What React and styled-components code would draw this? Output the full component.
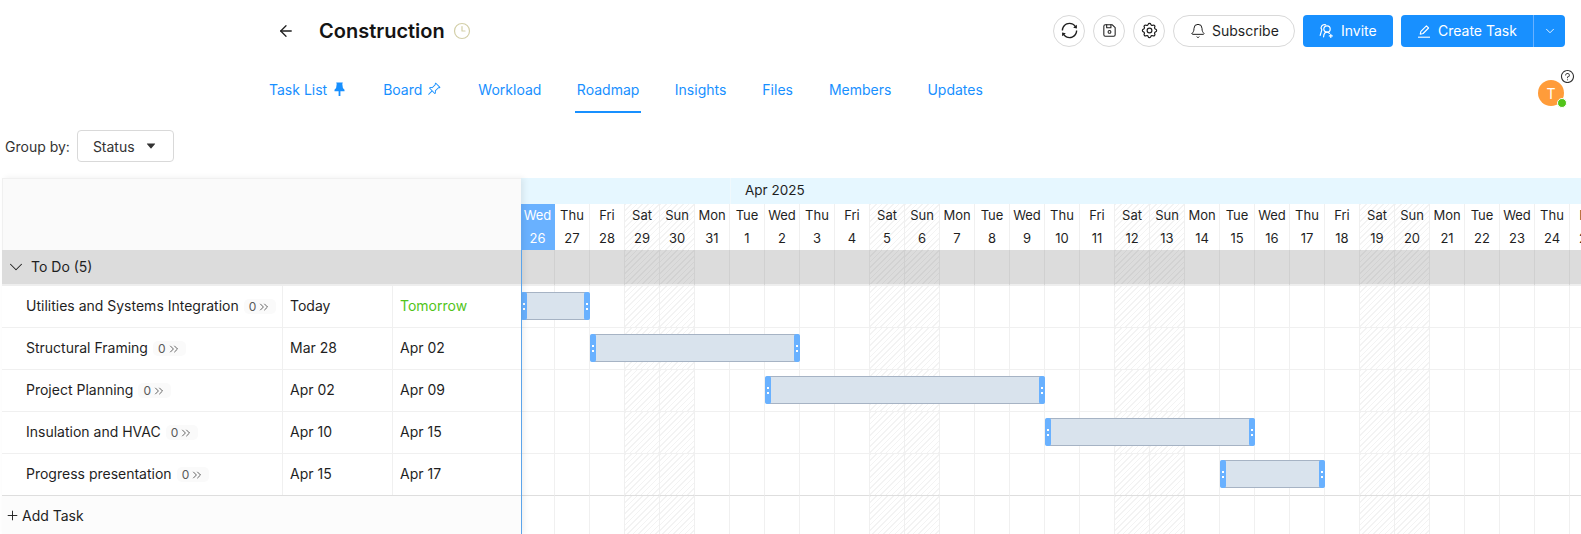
import React from 'react';
import styled, { createGlobalStyle } from 'styled-components';
import { ArrowLeft, Clock3, Bell, ChevronDown, ChevronsRight, Plus } from 'lucide-react';
import { AiOutlineSync, AiFillCaretDown, AiOutlineQuestionCircle } from 'react-icons/ai';
import { BsPinAngle } from 'react-icons/bs';
import { TbDeviceFloppy, TbSettings } from 'react-icons/tb';

const BLUE = '#1890ff';

const GlobalStyle = createGlobalStyle`
	html, body {
		margin: 0;
		background: #fff;
		font-family: Inter, "Noto Sans", sans-serif;
		color: #1f1f1f;
	}
	* {
		box-sizing: border-box;
	}
`;

const Page = styled.div`
	width: 1581px;
	height: 534px;
	overflow: hidden;
`;

const TopBar = styled.div`
	display: flex;
	align-items: center;
	height: 61px;
	padding: 0 16px 0 277px;
`;

const BackButton = styled.span`
	display: flex;
	width: 42px;
	color: #1f1f1f;
`;

const Title = styled.h1`
	margin: 0 8px 0 0;
	font-size: 20px;
	font-weight: 600;
	line-height: 28px;
	color: #141414;
`;

const TitleIcon = styled.span`
	display: flex;
	color: #d3cfa8;
`;

const Actions = styled.div`
	display: flex;
	align-items: center;
	margin-left: auto;
`;

const RoundButton = styled.button`
	display: flex;
	align-items: center;
	justify-content: center;
	width: 32px;
	height: 32px;
	margin-right: 8px;
	padding: 0;
	background: #fff;
	border: 1px solid #d9d9d9;
	border-radius: 50%;
	color: #1f1f1f;
`;

const SubscribeButton = styled.button`
	display: flex;
	align-items: center;
	gap: 6px;
	width: 122px;
	height: 32px;
	margin-right: 8px;
	padding: 0 0 0 16px;
	background: #fff;
	border: 1px solid #d9d9d9;
	border-radius: 16px;
	font: 400 14px Inter, sans-serif;
	color: #1f1f1f;
`;

const PrimaryButton = styled.button`
	display: flex;
	align-items: center;
	gap: 6px;
	height: 32px;
	padding: 0 0 0 15px;
	background: ${BLUE};
	border: 0;
	border-radius: 4px;
	font: 400 14px Inter, sans-serif;
	white-space: nowrap;
	color: #fff;
`;

const InviteButton = styled(PrimaryButton)`
	gap: 7px;
	width: 90px;
	margin-right: 8px;
`;

const SplitButton = styled.div`
	display: flex;
`;

const CreateButton = styled(PrimaryButton)`
	width: 132px;
	border-radius: 4px 0 0 4px;
`;

const CaretButton = styled(PrimaryButton)`
	justify-content: center;
	width: 32px;
	padding: 0;
	border-left: 1px solid #69b1ff;
	border-radius: 0 4px 4px 0;
`;

const NavBar = styled.div`
	display: flex;
	align-items: flex-start;
	height: 53px;
	padding-left: 267px;
`;

const Tab = styled.a`
	display: flex;
	align-items: center;
	gap: ${(p) => (p.$iconGap ? p.$iconGap : 5)}px;
	height: 52px;
	margin-right: 32px;
	padding: 6px ${(p) => (p.$endPad ? p.$endPad : p.$active ? 1.5 : 2)}px 0 ${(p) => (p.$active ? 1.5 : 2)}px;
	font-size: 14px;
	color: ${BLUE};
	border-bottom: 2px solid ${(p) => (p.$active ? BLUE : 'transparent')};
`;

const AvatarWrap = styled.div`
	position: relative;
	width: 26px;
	height: 26px;
	margin: 19px 17px 0 auto;
`;

const Avatar = styled.div`
	display: flex;
	align-items: center;
	justify-content: center;
	width: 26px;
	height: 26px;
	background: #ff9c3a;
	border-radius: 50%;
	font-size: 14px;
	color: #fff;
`;

const OnlineDot = styled.span`
	position: absolute;
	right: -3px;
	bottom: -2px;
	width: 10px;
	height: 10px;
	background: #52c41a;
	border: 1px solid #fff;
	border-radius: 50%;
`;

const HelpIcon = styled.span`
	position: absolute;
	top: -11px;
	right: -11px;
	display: flex;
	color: #333;
`;

const Toolbar = styled.div`
	display: flex;
	align-items: center;
	gap: 7px;
	height: 32px;
	margin: 16px 0 16px;
	padding-left: 5px;
	font-size: 14px;
	color: #333;
`;

const Select = styled.div`
	display: flex;
	align-items: center;
	gap: 10px;
	width: 97px;
	height: 32px;
	padding-left: 15px;
	background: #fff;
	border: 1px solid #d9d9d9;
	border-radius: 4px;
`;

const Gantt = styled.div`
	display: flex;
	padding-left: 2px;
	height: 356px;
`;

const Panel = styled.div`
	flex: none;
	width: 519px;
	position: relative;
	z-index: 2;
	box-shadow: 3px 0 6px rgba(0, 0, 0, 0.07);
	background: #fff;
`;

const PanelHead = styled.div`
	height: 72px;
	background: #fafafa;
	border-top: 1px solid #f0f0f0;
	border-left: 1px solid #f0f0f0;
`;

const GroupRow = styled.div`
	display: flex;
	align-items: center;
	gap: 4px;
	height: 36px;
	padding: 0 0 1px 3px;
	background: #dcdcdc;
	border-bottom: 2px solid #eeeeee;
	font-size: 14px;
`;

const TaskRow = styled.div`
	display: grid;
	grid-template-columns: 281px 110px 128px;
	height: 42px;
	border-bottom: 1px solid #f0f0f0;
	font-size: 14px;
`;

const Cell = styled.div`
	display: flex;
	align-items: center;
	padding-left: 7px;
	padding-bottom: 3px;
	border-right: 1px solid #f0f0f0;
	color: ${(p) => (p.$late ? '#52c41a' : '#1f1f1f')};
	&:last-child {
		border-right: 0;
	}
`;

const NameCell = styled(Cell)`
	padding-left: 24px;
	gap: 5px;
`;

const SubCount = styled.span`
	display: flex;
	align-items: center;
	gap: 1px;
	height: 15px;
	margin-top: 3px;
	padding: 0 5px;
	background: #fafafa;
	border-radius: 5px;
	font-size: 12px;
	color: #595959;
	svg {
		color: #444;
	}
`;

const AddTaskRow = styled.div`
	display: flex;
	align-items: center;
	gap: 2px;
	height: 39px;
	padding-left: 3px;
	background: #fcfcfc;
	border-top: 1px solid #dedede;
	margin-top: -1px;
	font-size: 14px;
`;

const Timeline = styled.div`
	flex: 1;
	min-width: 0;
	position: relative;
	overflow: hidden;
`;

const TodayLine = styled.div`
	position: absolute;
	top: 72px;
	bottom: 0;
	left: 0;
	width: 1px;
	background: #5ba4ea;
	z-index: 3;
`;

const MonthRow = styled.div`
	display: grid;
	grid-template-columns: 209px 1fr;
	width: 1100px;
	height: 26px;
	background: #e6f7ff;
	font-size: 13.5px;
	line-height: 24px;
	color: #1f1f1f;
`;

const Month = styled.div`
	padding-left: 14px;
	border-left: ${(p) => (p.$first ? '0' : '1px solid #f0f9fd')};
`;

const dayColumns = '34px repeat(31, 35px)';

const hatch = (line, base) =>
	`repeating-linear-gradient(135deg, ${line} 0, ${line} 1px, ${base} 1px, ${base} 4px)`;

const DayRow = styled.div`
	display: grid;
	grid-template-columns: ${dayColumns};
	height: 46px;
`;

const DayHead = styled.div`
	display: flex;
	flex-direction: column;
	align-items: center;
	font-size: 13px;
	line-height: 23px;
	color: ${(p) => (p.$today ? '#fff' : '#1f1f1f')};
	background: ${(p) => (p.$today ? '#69b1ff' : p.$weekend ? hatch('#f3f3f3', '#fff') : '#fff')};
	border-right: 1px solid ${(p) => (p.$today ? '#69b1ff' : '#f0f0f0')};
	border-bottom: 1px solid #f0f0f0;
`;

const GanttRow = styled.div`
	display: grid;
	grid-template-columns: ${dayColumns};
	grid-template-rows: 1fr;
	height: ${(p) => (p.$height ? p.$height : 42)}px;
`;

const GroupDay = styled.div`
	grid-row: 1;
	background: ${(p) => (p.$weekend ? hatch('#d2d2d2', '#dcdcdc') : '#dcdcdc')};
	background-clip: padding-box;
	border-right: 1px solid #d0d0d0;
	border-bottom: 2px solid #eeeeee;
`;

const DayCell = styled.div`
	grid-row: 1;
	grid-column: ${(p) => p.$col};
	background: ${(p) => (p.$weekend ? hatch('#f3f3f3', '#fff') : '#fff')};
	border-right: 1px solid #f0f0f0;
	border-bottom: 1px solid ${(p) => (p.$strong ? '#dedede' : '#f0f0f0')};
`;

const BarBox = styled.div`
	grid-row: 1;
	grid-column: ${(p) => p.$from} / ${(p) => p.$to};
	display: flex;
	justify-content: space-between;
	align-self: center;
	height: 28px;
	margin: 0 0 2px;
	background: #d9e3ed;
	border: 1px solid #a6b3c4;
	border-radius: 3px;
	z-index: 1;
`;

const Handle = styled.span`
	display: flex;
	flex-direction: column;
	align-items: center;
	justify-content: center;
	gap: 3px;
	width: 6px;
	margin: -1px;
	background: #69b1ff;
	border-radius: 2px;
	&::before,
	&::after {
		content: '';
		width: 2px;
		height: 2px;
		background: #fff;
	}
`;

const tasks = [
	{ name: 'Utilities and Systems Integration', start: 'Today', end: 'Tomorrow', late: true, from: 1, to: 3 },
	{ name: 'Structural Framing', start: 'Mar 28', end: 'Apr 02', from: 3, to: 9 },
	{ name: 'Project Planning', start: 'Apr 02', end: 'Apr 09', from: 8, to: 16 },
	{ name: 'Insulation and HVAC', start: 'Apr 10', end: 'Apr 15', from: 16, to: 22 },
	{ name: 'Progress presentation', start: 'Apr 15', end: 'Apr 17', from: 21, to: 24, last: true },
];

const WEEK = ['Sun', 'Mon', 'Tue', 'Wed', 'Thu', 'Fri', 'Sat'];

// Mar 26 2025 was a Wednesday
const days = Array.from({ length: 32 }, (_, i) => {
	const weekday = (3 + i) % 7;
	const date = i < 6 ? 26 + i : i - 5;
	return { key: i, label: WEEK[weekday], date, weekend: weekday === 0 || weekday === 6 };
});

const InviteIcon = () => (
	<svg width="16" height="16" viewBox="0 0 16 16" fill="none" stroke="currentColor" strokeWidth="1.2" strokeLinecap="round">
		<circle cx="9" cy="6" r="3.2" />
		<path d="M5.6 13.8c.2-2.500 1.600-4.600 3.400-4.600 1 0 1.800.4 2.400 1.100" />
		<path d="M7.600 1.900A3.200 3.200 0 0 0 3.800 6.800L2.200 12.400" />
		<path d="M12.800 11.400v3M11.300 12.900h3" />
	</svg>
);

const CreateIcon = () => (
	<svg width="16" height="16" viewBox="0 0 16 16" fill="none" stroke="currentColor" strokeWidth="1.1" strokeLinejoin="round">
		<path d="M4.200 11.200l.7-2.900 5.500-5.500 2.200 2.200-5.500 5.500z" />
		<path d="M2 14.200h12" />
	</svg>
);

const PinFilled = () => (
	<svg width="11" height="14" viewBox="0 0 11 14" fill="currentColor">
		<path d="M2.200 .5h6.600L8.300 2l.6 4 1.600 1.800v1.400H.5V7.800L2.100 6l.6-4z" />
		<path d="M4.600 9h1.800v5H4.600z" />
	</svg>
);

const App = () => {
	return (
		<Page>
			<GlobalStyle />
			<TopBar>
				<BackButton>
					<ArrowLeft size={18} strokeWidth={1.7} />
				</BackButton>
				<Title>Construction</Title>
				<TitleIcon>
					<Clock3 size={18} strokeWidth={1.6} />
				</TitleIcon>
				<Actions>
					<RoundButton>
						<AiOutlineSync size={19} />
					</RoundButton>
					<RoundButton>
						<TbDeviceFloppy size={17} strokeWidth={1.5} />
					</RoundButton>
					<RoundButton>
						<TbSettings size={19} strokeWidth={1.5} />
					</RoundButton>
					<SubscribeButton>
						<Bell size={16} strokeWidth={1.5} />
						Subscribe
					</SubscribeButton>
					<InviteButton>
						<InviteIcon />
						Invite
					</InviteButton>
					<SplitButton>
						<CreateButton>
							<CreateIcon />
							Create Task
						</CreateButton>
						<CaretButton>
							<ChevronDown size={14} strokeWidth={1.5} />
						</CaretButton>
					</SplitButton>
				</Actions>
			</TopBar>

			<NavBar>
				<Tab $iconGap={7} $endPad={4}>
					Task List <PinFilled />
				</Tab>
				<Tab $endPad={3}>
					Board <BsPinAngle size={14} />
				</Tab>
				<Tab>Workload</Tab>
				<Tab $active>Roadmap</Tab>
				<Tab>Insights</Tab>
				<Tab>Files</Tab>
				<Tab>Members</Tab>
				<Tab>Updates</Tab>
				<AvatarWrap>
					<Avatar>T</Avatar>
					<OnlineDot />
					<HelpIcon>
						<AiOutlineQuestionCircle size={15} />
					</HelpIcon>
				</AvatarWrap>
			</NavBar>

			<Toolbar>
				Group by:
				<Select>
					Status <AiFillCaretDown size={12} />
				</Select>
			</Toolbar>

			<Gantt>
				<Panel>
					<PanelHead />
					<GroupRow>
						<ChevronDown size={22} strokeWidth={1.1} />
						To Do (5)
					</GroupRow>
					{tasks.map((task) => (
						<TaskRow key={task.name}>
							<NameCell>
								{task.name}
								<SubCount>
									0 <ChevronsRight size={14} strokeWidth={1.4} />
								</SubCount>
							</NameCell>
							<Cell>{task.start}</Cell>
							<Cell $late={task.late}>{task.end}</Cell>
						</TaskRow>
					))}
					<AddTaskRow>
						<Plus size={15} strokeWidth={1.5} />
						Add Task
					</AddTaskRow>
				</Panel>

				<Timeline>
					<TodayLine />
					<MonthRow>
						<Month $first />
						<Month>Apr 2025</Month>
					</MonthRow>
					<DayRow>
						{days.map((day) => (
							<DayHead key={day.key} $today={day.key === 0} $weekend={day.weekend}>
								<span>{day.label}</span>
								<span>{day.date}</span>
							</DayHead>
						))}
					</DayRow>
					<GanttRow $height={36}>
						{days.map((day) => (
							<GroupDay key={day.key} $weekend={day.weekend} />
						))}
					</GanttRow>
					{tasks.map((task) => (
						<GanttRow key={task.name}>
							{days.map((day) => (
								<DayCell key={day.key} $col={day.key + 1} $weekend={day.weekend} $strong={task.last} />
							))}
							<BarBox $from={task.from} $to={task.to}>
								<Handle />
								<Handle />
							</BarBox>
						</GanttRow>
					))}
					<GanttRow $height={39}>
						{days.map((day) => (
							<DayCell key={day.key} $col={day.key + 1} $weekend={day.weekend} />
						))}
					</GanttRow>
				</Timeline>
			</Gantt>
		</Page>
	);
};

export default App;
